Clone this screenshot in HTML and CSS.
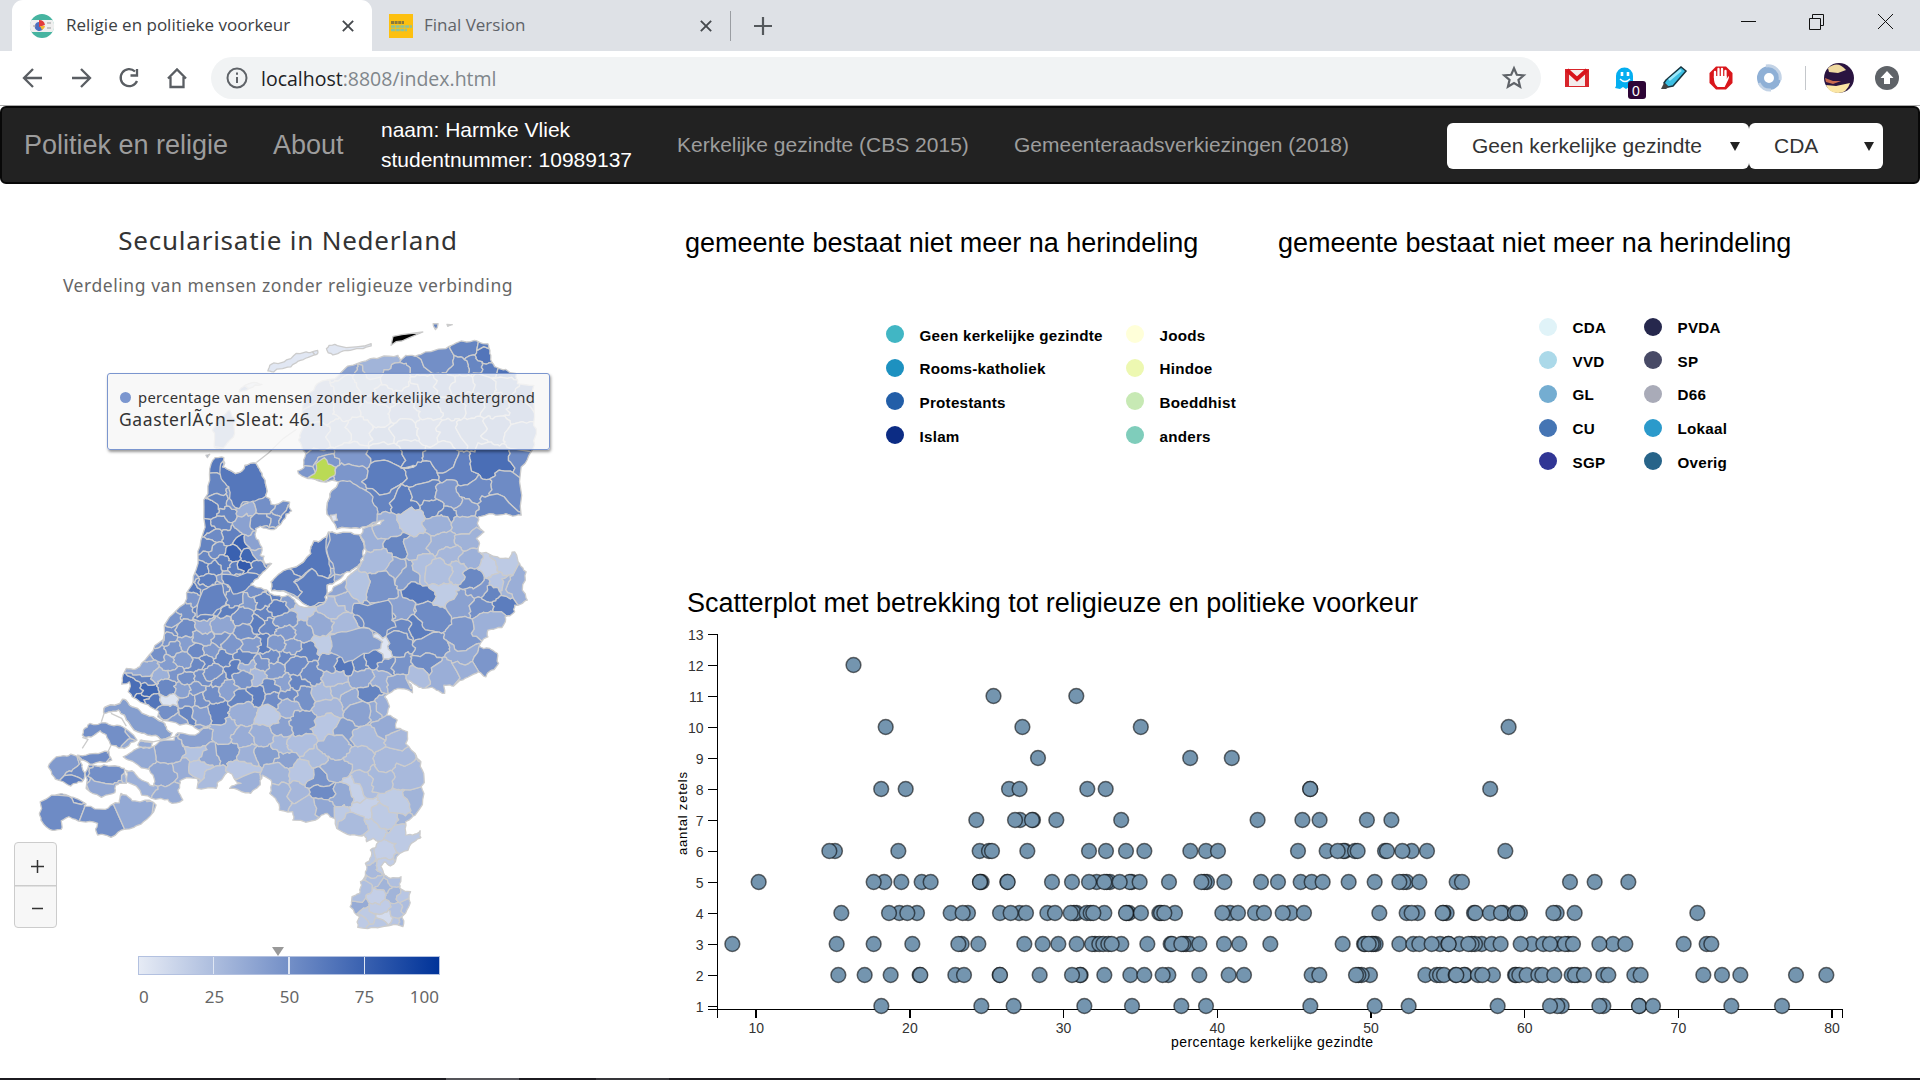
FILE: index.html
```html
<!DOCTYPE html>
<html lang="nl">
<head>
<meta charset="utf-8">
<title>Religie en politieke voorkeur</title>
<link rel="stylesheet" href="styles.css">
</head>
<body>
<div class="tabstrip">
  <div class="tab tab-active">
    <svg class="favicon" viewBox="0 0 24 24"><circle cx="12" cy="12" r="12" fill="#46b4a0"/><path d="M1.500 6h21a12 12 0 0 1 0 12h-21a12 12 0 0 1 0-12z" fill="#efefef"/><path d="M10 8a4.500 4.500 0 1 0 3 7l-3-3z" fill="#4a6fc0"/><path d="M9 6a6 6 0 0 1 6 5l-6 2z" fill="#e33b3b"/><path d="M10 12h5a5 5 0 0 1-3 4z" fill="#f4b731"/><path d="M3 12h3M17 9h4M17 14h4" stroke="#999"/></svg>
    <span>Religie en politieke voorkeur</span>
    <svg class="x" viewBox="0 0 14 14"><path d="M1 1l12 12M13 1L1 13"/></svg>
  </div>
  <div class="tab tab-idle">
    <svg class="favicon" viewBox="0 0 24 24"><path d="M0 0h24v24H0z" fill="#fdc010"/><path d="M2 8.500h13" stroke="#8b7a3c" stroke-width="3" stroke-dasharray="3 .6"/><path d="M2 12.500h21M2 16h16" stroke="#8fc29a" stroke-width="2.600" stroke-dasharray="4 .7"/></svg>
    <span>Final Version</span>
    <svg class="x" viewBox="0 0 14 14"><path d="M1 1l12 12M13 1L1 13"/></svg>
  </div>
  <svg class="plus" viewBox="0 0 18 18"><path d="M9 0v18M0 9h18"/></svg>
  <svg class="winctl" viewBox="0 0 154 20"><path d="M1 8.500h15M69.500 5.500h11v11h-11zM72.500 5v-3.500h11v11H81M138 1l15 15M153 1l-15 15"/></svg>
</div>
<div class="toolbar">
  <svg class="navicons" viewBox="0 0 170 24"><path d="M20 12H3M11 3l-9 9 9 9M50 12h17M59 3l9 9-9 9M113 5.500A8.500 8.500 0 1 0 115 15M115 3v6.500h-6.500M146 12.500l9-9 9 9M148.500 11v10h13V11"/></svg>
  <div class="omnibox">
    <svg class="info" viewBox="0 0 22 22"><circle cx="11" cy="11" r="9.500"/><path d="M11 10v6M11 5.500v2.200"/></svg>
    <span class="url">localhost<span>:8808/index.html</span></span>
    <svg class="star" viewBox="0 0 24 24"><path d="M12 3l2.600 6 6.400.5-4.900 4.200 1.500 6.300-5.600-3.400L6.400 20l1.500-6.300L3 9.500 9.400 9z"/></svg>
  </div>
  <svg class="ext" viewBox="0 0 340 44">
    <path d="M5 13h24v18H5z" fill="#d8252b"/><path d="M9 14h16v16H9z" fill="#f4ecec"/><path d="M7 14l10 9 10-9" fill="none" stroke="#d8141c" stroke-width="4"/>
    <path d="M56 30V20a8.500 8.500 0 0 1 17 0v13l-4-2-3 2-3-2-3 2-5-1z" fill="#04aef0"/><path d="M62 16v4M68 16v4" stroke="#fff" stroke-width="2.600"/><path d="M60 23q5 5 10 0" stroke="#fff" stroke-width="1.500" fill="none"/>
    <rect x="68" y="25" width="18" height="18" rx="3" fill="#2d0536"/><text x="72" y="40" class="badge">0</text>
    <path d="M106 24l15-13 5 4-13 15-5 1-4-4z" fill="#3cbfe3" stroke="#17343f" stroke-width="1.500"/><path d="M101 33l3-6 5 4-3 2z" fill="#444"/><path d="M109 24l12-10" stroke="#9be8fa" stroke-width="2.500"/>
    <path d="M156 10.500h10l6.500 6.500v10l-6.500 6.500h-10l-6.500-6.500v-10z" fill="#d9161b"/><path d="M155 22v-6M158.500 22v-9M162 22v-9M165.500 22v-7" stroke="#fff" stroke-width="2.300" stroke-linecap="round"/><path d="M153.900 20h12.700v3l2-3q1 1-1 5l-3 6h-7q-4-3-3.700-10z" fill="#fff"/>
    <circle cx="209" cy="22" r="8.500" fill="none" stroke="#8fb0d6" stroke-width="7"/><path d="M206 10a12 12 0 0 1 14 14M211 34a12 12 0 0 1-12-7" fill="none" stroke="#c3d3e6" stroke-width="3"/>
    <path d="M245.500 10v24" stroke="#c4c7cb"/>
    <circle cx="279" cy="22" r="15" fill="#2a1440"/><path d="M268 12q10-8 18 2l-8 3-9-1z" fill="#efd9a0"/><path d="M266 29l10 1 14-3q-3 10-12 10-9 0-12-8z" fill="#fbe6a4"/><path d="M265 22l8 3 8 0-8 3-7-2z" fill="#c86a4e"/>
    <circle cx="327" cy="22" r="12" fill="#5f6368"/><path d="M327 15l6.500 7h-3.500v6h-6v-6h-3.500z" fill="#fff"/>
  </svg>
</div>
<nav class="navbar">
  <a class="brand">Politiek en religie</a>
  <a class="brand about">About</a>
  <div class="who"><span>naam: Harmke Vliek</span><span>studentnummer: 10989137</span></div>
  <a class="link l1">Kerkelijke gezindte (CBS 2015)</a>
  <a class="link l2">Gemeenteraadsverkiezingen (2018)</a>
  <div class="sel s1"><span>Geen kerkelijke gezindte</span><i></i></div>
  <div class="sel s2"><span>CDA</span><i></i></div>
</nav>
<main class="page">
  <section class="mapcol">
    <h2 class="maptitle">Secularisatie in Nederland</h2>
    <p class="mapsub">Verdeling van mensen zonder religieuze verbinding</p>
    <div class="mapbox">
      <svg id="map" class="map" viewBox="0 350 1568 1840" preserveAspectRatio="none"></svg>
      <div class="tooltip">
        <div class="tip1"><b></b><span>percentage van mensen zonder kerkelijke achtergrond</span></div>
        <div class="tip2">GaasterlÃ¢n–Sleat: 46.1</div>
      </div>
      <div class="zoom"><svg viewBox="0 0 44 86"><path d="M22.500 17v13M16 23.500h13M17 65.500h11"/></svg></div>
    </div>
    <div class="axis">
      <i class="marker"></i>
      <div class="bar"><i></i><i></i><i></i></div>
      <div class="nums"><span>0</span><span>25</span><span>50</span><span>75</span><span>100</span></div>
    </div>
  </section>
  <section class="charts">
    <div class="pies">
      <div class="pie">
        <h3>gemeente bestaat niet meer na herindeling</h3>
        <ul class="legend lg1">
          <li><i style="background:#41b6c4"></i><span>Geen kerkelijke gezindte</span></li>
          <li><i style="background:#1d91c0"></i>Rooms-katholiek</li>
          <li><i style="background:#225ea8"></i>Protestants</li>
          <li><i style="background:#0c2c84"></i>Islam</li>
          <li><i style="background:#ffffd9"></i>Joods</li>
          <li><i style="background:#edf8b1"></i>Hindoe</li>
          <li><i style="background:#c7e9b4"></i>Boeddhist</li>
          <li><i style="background:#7fcdbb"></i>anders</li>
        </ul>
      </div>
      <div class="pie">
        <h3>gemeente bestaat niet meer na herindeling</h3>
        <ul class="legend lg2">
          <li><i style="background:#e0f3f8"></i>CDA</li>
          <li><i style="background:#abd9e9"></i>VVD</li>
          <li><i style="background:#74add1"></i>GL</li>
          <li><i style="background:#4575b4"></i>CU</li>
          <li><i style="background:#313695"></i>SGP</li>
          <li><i style="background:#26284d"></i>PVDA</li>
          <li><i style="background:#484a66"></i>SP</li>
          <li><i style="background:#a9abb8"></i>D66</li>
          <li><i style="background:#2b9acb"></i>Lokaal</li>
          <li><i style="background:#276489"></i>Overig</li>
        </ul>
      </div>
    </div>
    <h3 class="sctitle">Scatterplot met betrekking tot religieuze en politieke voorkeur</h3>
    <svg id="scatter" class="scatter" viewBox="660 620 1200 440"></svg>
  </section>
</main>
<div class="taskbar"><i></i><b></b></div>
<script src="charts.js"></script>
</body>
</html>
```
FILE: styles.css
```css
* { box-sizing: border-box; }
body { margin: 0; width: 1920px; height: 1080px; overflow: hidden; background: #fff; font-family: "Liberation Sans", Arial, sans-serif; display: flex; flex-direction: column; }
svg { display: block; flex: none; overflow: visible; }
span { white-space: nowrap; }

.tabstrip { height: 51px; flex: none; background: #dee1e6; display: flex; align-items: center; font: 17px "Open Sans", "Noto Sans", sans-serif; color: #5f6368; }
.tab { height: 51px; display: flex; align-items: center; }
.tab span { margin-top: -2px; }
.tab-active { margin-left: 12px; width: 360px; padding: 0 18px 0 18px; background: #fff; border-radius: 11px 11px 0 0; color: #3c4043; }
.tab-idle { width: 359px; height: 30px; padding: 0 18px 0 17px; border-right: 1px solid #9a9da2; }
.favicon { width: 24px; height: 24px; margin-right: 12px; }
.tab-idle .favicon { margin-right: 11px; }
.x { width: 12px; height: 12px; margin-left: auto; fill: none; stroke: #45494d; stroke-width: 2.2; }
.plus { width: 18px; height: 18px; margin-left: 23px; fill: none; stroke: #54585c; stroke-width: 2.2; }
.winctl { width: 154px; height: 20px; margin-left: auto; margin-right: 26px; margin-top: -5px; fill: none; stroke: #111; stroke-width: 1; }

.toolbar { height: 55px; flex: none; border-bottom: 1px solid #a9a9a9; display: flex; align-items: center; background: #fff; }
.navicons { width: 170px; height: 24px; margin-left: 22px; fill: none; stroke: #5a5e63; stroke-width: 2.3; }
.omnibox { margin-left: 19px; width: 1330px; height: 42px; border-radius: 21px; background: #f1f3f4; display: flex; align-items: center; padding: 0 14px 0 15px; font: 19.5px "Open Sans", "Noto Sans", sans-serif; color: #202124; }
.url > span { color: #80868b; }
.info { width: 22px; height: 22px; margin-right: 13px; fill: none; stroke: #5f6368; stroke-width: 2; }
.star { width: 26px; height: 26px; margin-left: auto; fill: none; stroke: #5f6368; stroke-width: 2; }
.ext { width: 340px; height: 44px; margin-left: 19px; }
.badge { font: 14px "Liberation Sans", sans-serif; fill: #fff; }

.navbar { height: 78px; flex: none; background: #222; border: 2px solid #080808; border-radius: 6px; display: flex; align-items: center; color: #9d9d9d; padding-left: 22px; }
.brand { font-size: 27px; width: 249px; }
.about { width: 108px; }
.who { color: #fff; font-size: 21px; line-height: 30px; display: flex; flex-direction: column; width: 296px; }
.link { font-size: 21px; }
.l1 { width: 337px; }
.l2 { width: 433px; }
.sel { height: 46px; background: #fff; border-radius: 6px; color: #333; font-size: 21px; display: flex; align-items: center; justify-content: space-between; padding: 0 9px 0 25px; margin-top: 2px; }
.sel i { border: 5.500px solid transparent; border-top: 9px solid #222; border-bottom: 0; }
.s1 { width: 302px; }
.s2 { width: 134px; }

.page { flex: 1; display: flex; }
.mapcol { width: 660px; font-family: "Noto Sans", "Open Sans", sans-serif; }
.maptitle { margin: 37px 0 0; width: 576px; text-align: center; font-weight: 400; font-size: 26px; line-height: 38px; color: #333; letter-spacing: .77px; }
.mapsub { margin: 13px 0 0; width: 576px; text-align: center; font-size: 17.500px; line-height: 26px; color: #666; letter-spacing: .56px; }
.mapbox { position: relative; height: 613px; margin-top: 19px; }
.map { width: 600px; height: 613px; overflow: hidden; }
.tooltip { position: absolute; left: 107px; top: 56px; width: 443px; height: 77px; border: 1.500px solid #7b96cf; border-radius: 3px; background: rgba(247,247,247,.85); box-shadow: 1px 2px 3px rgba(0,0,0,.4); color: #333; padding: 12px 0 0 11px; }
.tip1 { display: flex; align-items: center; font-size: 14.800px; line-height: 22px; letter-spacing: .33px; }
.tip1 b { width: 11px; height: 11px; border-radius: 50%; background: #7b96cf; margin: 0 7px 0 1px; }
.tip2 { font-size: 17.500px; line-height: 22px; letter-spacing: .6px; }
.zoom { position: absolute; left: 13.500px; top: 525px; width: 43px; height: 86px; background: linear-gradient(#ccc,#ccc) 0 42px/100% 1.500px no-repeat #f7f7f7; border: 1px solid #ccc; border-radius: 4px; }
.zoom svg { width: 44px; height: 86px; stroke: #333; stroke-width: 1.500; }
.axis { margin: 17px 0 0 138px; width: 302px; }
.marker { display: block; width: 0; border: 6px solid transparent; border-top: 9px solid #999; border-bottom: 0; margin-left: 134px; }
.bar { height: 19px; display: flex; justify-content: space-evenly; border: 1px solid #b3c1e0; background: linear-gradient(90deg, #e6ebf5, #003399); }
.bar i { width: 1.500px; background: #dfe6f3; }
.nums { display: grid; grid-template-columns: 39px 75px 75px 75px 38px; font-size: 17px; line-height: 24px; color: #666; margin-top: 10px; text-align: center; }
.nums span:first-child { text-align: left; padding-left: 1px; }
.nums span:last-child { justify-self: end; padding-right: 1px; }

.charts { flex: 1; }
h3 { font-weight: 400; font-size: 27px; line-height: 36px; margin: 0; color: #000; }
.pies { display: flex; padding: 41px 0 0 25px; height: 383px; }
.pie { width: 593px; flex: none; }
.legend { list-style: none; margin: 0; padding: 0; display: grid; grid-auto-flow: column; justify-content: start; font-weight: 700; font-size: 15.200px; letter-spacing: .25px; color: #000; }
.legend li { display: flex; align-items: center; }
.legend i { width: 18px; height: 18px; border-radius: 50%; margin-right: 15.500px; margin-top: -2px; }
.lg1 { grid-template-rows: repeat(4, 33.600px); grid-template-columns: 240px 200px; margin: 57.500px 0 0 201px; }
.lg2 { grid-template-rows: repeat(5, 33.600px); grid-template-columns: 105px 120px; margin: 50px 0 0 261px; }
.sctitle { margin-left: 27px; margin-top: 18px; }
.scatter { width: 1200px; height: 440px; margin-top: -1px; }
.scatter text { font-family: "Liberation Sans", Arial, sans-serif; font-size: 14px; fill: #333; }
.scatter .lab { fill: #000; }
.scatter .ylab { font-size: 13px; }
.scatter path { fill: none; stroke: #000; shape-rendering: crispEdges; }
.scatter circle { fill: #7495af; stroke: rgba(0,0,0,.56); stroke-width: 1.500; }
.map path { vector-effect: non-scaling-stroke; stroke: #ccc; stroke-width: 1.300; stroke-linejoin: round; }

.taskbar { position: absolute; left: 0; bottom: 0; width: 1920px; height: 2px; background: #1c1b20; display: flex; }
.taskbar i { width: 73px; margin-left: 446px; background: #55555a; }
.taskbar b { width: 73px; margin-left: 77px; background: #36363a; }
```
FILE: charts.js
```js
const NS = 'http://www.w3.org/2000/svg';
function add(parent, tag, attrs, text) {
  const el = document.createElementNS(NS, tag);
  for (const k in attrs) el.setAttribute(k, attrs[k]);
  if (text !== undefined) el.textContent = text;
  parent.appendChild(el);
  return el;
}

/* ---------- choropleth ---------- */
const land = [
  '562,772 585,772 582,800 597,808 615,820 632,812 640,795 668,788 680,812 693,840 694,888 705,895 708,912 740,902 757,906 755,920 762,932 747,942 745,955 735,970 722,984 708,988 695,984 680,978 668,985 668,1010 678,1028 685,1050 680,1065 690,1068 690,1085 696,1092 710,1090 700,1102 692,1112 680,1125 665,1140 655,1155 672,1162 700,1172 715,1185 735,1190 752,1185 770,1200 775,1210 805,1222 850,1205 855,1185 872,1160 905,1138 935,1105 950,1080 957,1055 952,1025 942,1005 948,985 975,978 1003,960 990,963 970,975 940,985 880,987 862,950 862,890 885,845 870,840 845,845 825,838 805,835 780,820 778,812 795,800 797,770 790,745 780,720 785,700 790,640 820,570 850,540 890,518 945,485 985,475 1040,465 1046,480 1060,465 1085,468 1100,462 1165,445 1205,422 1240,420 1262,430 1275,430 1280,460 1285,485 1305,505 1350,520 1352,550 1395,555 1397,650 1402,700 1385,760 1362,800 1362,945 1340,948 1322,940 1300,945 1280,940 1250,950 1252,980 1265,995 1245,1015 1250,1055 1300,1070 1330,1075 1338,1056 1345,1055 1358,1090 1375,1115 1365,1170 1378,1200 1365,1210 1345,1215 1345,1235 1320,1250 1312,1282 1275,1290 1275,1310 1258,1325 1252,1338 1280,1345 1300,1360 1303,1390 1285,1410 1270,1430 1250,1415 1215,1435 1185,1458 1160,1455 1162,1480 1140,1470 1130,1462 1105,1465 1080,1450 1065,1440 1078,1478 1040,1465 1020,1478 1005,1490 1018,1520 1010,1545 1038,1560 1035,1585 1065,1595 1060,1630 1085,1660 1100,1685 1108,1730 1108,1780 1085,1845 1060,1865 1060,1905 1078,1905 1098,1892 1100,1912 1075,1930 1045,1960 1020,1998 1005,1985 995,2000 1005,2025 1020,2035 1048,2030 1045,2065 1073,2075 1070,2115 1050,2150 1053,2180 1010,2178 980,2182 935,2182 940,2150 915,2120 920,2090 940,2080 945,2055 942,2045 955,2025 955,1990 970,1970 968,1950 990,1925 975,1915 958,1925 952,1905 915,1905 880,1885 875,1855 855,1840 840,1845 825,1860 765,1860 765,1835 730,1830 722,1800 705,1780 710,1745 685,1725 680,1755 655,1780 620,1768 600,1765 605,1758 630,1750 595,1715 578,1740 565,1765 515,1765 515,1735 470,1742 465,1770 478,1800 450,1810 420,1795 370,1785 330,1745 328,1710 345,1712 370,1740 402,1758 400,1725 390,1708 355,1690 322,1670 350,1650 390,1645 455,1620 465,1598 520,1598 550,1578 520,1590 470,1575 412,1550 415,1535 405,1528 380,1512 345,1490 335,1475 338,1445 318,1452 330,1405 348,1408 365,1400 400,1352 430,1300 470,1220 495,1165 512,1110 525,1020 533,920 548,840 556,780',
  '708,1145 730,1120 755,1105 812,1060 812,1040 820,1022 832,1025 858,995 880,1000 940,1003 953,1035 950,1070 940,1095 915,1115 900,1120 875,1145 855,1155 855,1180 850,1205 810,1220 790,1208 770,1190 740,1172 710,1172',
  '275,1520 320,1497 335,1508 360,1525 390,1548 425,1565 435,1580 450,1598 445,1610 420,1618 385,1605 350,1590 335,1565 325,1545 310,1530 285,1535 272,1540',
  '218,1590 235,1570 265,1568 290,1575 320,1580 358,1620 325,1645 290,1635 278,1605 262,1592 250,1602 225,1612 215,1605',
  '203,1665 250,1660 285,1655 292,1680 260,1685 235,1692 210,1680',
  '126,1700 160,1668 185,1662 205,1670 215,1695 222,1720 215,1745 205,1745 185,1758 165,1745 135,1722',
  '222,1720 232,1695 255,1698 300,1697 325,1705 330,1750 302,1755 300,1778 265,1792 225,1765',
  '360,1635 370,1620 398,1628 395,1642 375,1645',
  '105,1805 135,1785 165,1782 192,1792 225,1812 220,1818 275,1828 295,1812 312,1808 316,1780 330,1785 345,1802 390,1800 408,1815 375,1865 350,1882 325,1888 290,1912 255,1905 255,1870 215,1865 180,1850 160,1862 160,1888 130,1888 110,1865 103,1840',
  '560,740 555,690 585,645 600,630 618,660 610,710 580,748',
  '700,512 705,495 715,488 760,475 800,455 830,450 830,460 812,468 785,480 760,500 715,515',
  '853,445 860,435 875,432 890,438 970,430 970,437 915,450 890,455 870,464 858,458',
  '625,575 640,555 670,547 685,552 650,565',
  '1132,370 1145,370 1138,388', '1168,372 1182,373 1170,378', '538,765 548,762 542,772'
];
/* x, y, percentage */
const seeds = `885,515,40 990,495,30 1100,490,50 1155,485,50 1220,450,56 1195,500,54 1240,490,55 1267,465,64 1310,508,66 1267,437,60 1262,505,60
840,580,40 900,560,35 960,540,38 1030,540,45 1000,590,48 1060,580,50 1110,560,52 1160,550,58 1210,560,50 1260,560,62 1310,560,52 1370,590,55 1350,640,62 1290,620,60 1230,610,58 1180,620,60 1120,620,52 1060,640,50 980,640,42 910,620,40 850,640,42 830,700,45 880,690,42 940,690,45 1000,700,55 1060,700,58 1120,690,50 1180,700,58 1240,690,60 1300,680,62 1360,700,52
820,770,46 795,818,46 846,808,46 925,775,45 918,825,46 1010,765,62 1070,755,62 1000,825,60 1095,825,60 1145,770,58 1190,810,58 1290,775,68 1380,765,52 1235,880,52 1325,880,52 1010,890,56 1060,905,60 1110,880,56 1135,930,56 1175,895,45 1215,920,45 1275,930,54 915,910,46 1160,945,56
1020,985,32 1075,965,18 1145,965,32 1215,975,32 975,1015,32 1040,1030,55 1095,1040,32 1165,1030,31 1225,1020,31 985,1080,26 1020,1110,38 1065,1125,42 1110,1110,24 1150,1120,24 1195,1110,24 1185,1065,28 1225,1085,32 1275,1100,15 1330,1090,18 1305,1150,20 1355,1160,33 1232,1130,54 1282,1180,56 1255,1165,45 1312,1215,60 1325,1160,30 1160,1180,17 1090,1195,63 1210,1210,40 1262,1220,50 1280,1265,32 1125,1250,52 1045,1220,40 990,1160,48 930,1160,22 895,1195,32 885,1160,38 868,1225,27 980,1250,52 890,1275,27 920,1330,40 1050,1300,54 1095,1285,60 1215,1300,46 1120,1340,50 1210,1355,35 1272,1385,46 1035,1340,54 1003,1350,3 1115,1398,52 1090,1430,25 1150,1420,33 1215,1415,33 1020,1400,50 1045,1400,48 975,1370,60 935,1385,55 900,1400,63 1000,1440,33 1045,1450,38 940,1430,38 965,1480,56 920,1500,35 890,1470,30 845,1480,26 880,1435,28 1000,1520,33 975,1530,36 940,1530,40 860,1520,28
820,1065,63 905,1060,52 750,1140,60 815,1170,60
568,795,62 640,850,63 565,870,56 640,925,33 690,915,50 735,930,50 715,960,50 548,930,63 590,940,55 545,985,63 575,970,56 640,970,40 685,965,54 600,1005,58 560,1005,52 545,1035,56 632,1035,75 565,1050,52 665,1025,40 675,1055,36 610,1065,75 650,1070,72 585,1090,60 637,1100,78 618,1105,60 668,1108,60 535,1075,55 530,1105,62 560,1105,60 625,1145,62 545,1140,60 507,1165,62 525,1160,56 560,1205,57 500,1200,46 610,1195,54 635,1250,50 575,1215,57
690,1330,60 695,1240,56 670,1270,60 800,1355,56 785,1230,18 848,1330,17 810,1420,52 870,1385,50 740,1450,40 600,1465,40 670,1425,27 650,1400,32 580,1280,38 535,1270,34 390,1400,36 420,1425,32 490,1435,50 440,1460,54
435,1533,50 490,1545,56 565,1530,58 352,1470,68 385,1468,72 370,1500,76 405,1510,64 440,1500,4 700,1550,18 640,1535,33 750,1520,33 855,1585,20 790,1570,48 735,1580,40 590,1590,32 515,1612,40 440,1655,40 510,1655,22 595,1660,47 545,1670,38 640,1615,34 690,1605,33 700,1660,42 745,1680,40 430,1720,38 475,1715,34 525,1705,20 560,1735,26 370,1670,36 370,1760,32 450,1780,35 635,1710,20 650,1750,32 730,1720,30 780,1715,20 835,1735,48 845,1775,52 870,1705,35 885,1790,36 738,1790,30 770,1790,28 800,1820,27 840,1820,37 925,1770,14 955,1830,14 950,1755,25 1035,1800,17 1000,1850,18 1092,1790,30 1050,1730,27 1020,1680,27 940,1680,27 970,1620,26 1045,1620,28 880,1855,18 925,1875,26 970,1885,17 1040,1880,30 900,1600,42 875,1635,32 1000,1965,15 1050,1920,18 975,2010,27 1000,2060,30 1030,2085,30 935,2115,35 1005,2150,8 960,2150,18 1040,2170,20 985,2085,15 1060,2090,20 1030,2035,24
370,1560,40 280,1600,50 250,1672,52 160,1695,44 200,1720,52 185,1755,58 270,1712,50 265,1760,38 160,1830,52 265,1865,50 355,1830,36 590,690,42 760,480,2 900,445,2`.split(/\s+/).map(s => s.split(',').map(Number));

/* large municipalities with their own outline */
const large = [
  [46, '862,890 885,845 915,842 940,862 975,890 978,915 988,935 985,965 940,985 880,987 862,950'],
  [3, '864,945 879,942 882,960 868,963'],
  [63, '755,1105 812,1060 812,1040 820,1022 832,1025 858,995 860,1080 865,1120 858,1135 815,1105 788,1130'],
  [52, '860,995 880,1000 940,1003 953,1035 950,1070 940,1095 915,1115 900,1120 875,1122 862,1080'],
  [60, '708,1145 730,1120 755,1105 788,1130 768,1145 790,1175 778,1192 740,1172 710,1172'],
  [60, '768,1145 815,1105 858,1135 875,1122 875,1145 855,1155 855,1180 850,1205 810,1220 790,1208 778,1192 790,1175'],
  [54, '925,1210 1015,1200 1025,1240 1035,1280 1000,1315 950,1280 945,1255 922,1240'],
  [41, '862,1305 905,1295 965,1285 1000,1325 995,1345 950,1360 900,1388 862,1355'],
  [57, '530,1170 580,1150 595,1200 575,1225 555,1245 515,1252'],
  [62, '580,1122 670,1120 680,1125 665,1140 650,1160 610,1182 585,1150'],
  [63, '585,780 582,800 597,808 615,820 632,812 640,795 668,788 680,812 693,840 694,888 660,903 635,905 625,925 600,895 598,860 578,835'],
  [42, '275,1520 320,1497 335,1508 360,1525 390,1548 425,1565 435,1580 450,1598 445,1610 420,1618 385,1605 350,1590 335,1565 325,1545 310,1530 285,1535 272,1540'],
  [-1, '825,790 848,772 858,792 878,800 875,825 862,832 845,845 830,838 805,832 822,820']
];

let rs = 7;
const rnd = () => (rs = (rs * 16807) % 2147483647) / 2147483647;
const zones = [ /* x0,y0,x1,y1,min distance,base value,spread */
  [540, 900, 760, 1100, 34, 56, 16], [440, 1100, 800, 1500, 33, 51, 18], [380, 1300, 560, 1560, 31, 48, 20],
  [560, 1480, 860, 1560, 46, 38, 12], [640, 1560, 1020, 1760, 48, 31, 14], [800, 1230, 900, 1500, 44, 40, 24],
  [930, 1990, 1070, 2180, 30, 22, 12]
];
for (const [x0, y0, x1, y1, d, base, sp] of zones) {
  for (let i = 0; i < 1400; i++) {
    const x = x0 + rnd() * (x1 - x0), y = y0 + rnd() * (y1 - y0);
    if (seeds.every(s => Math.hypot(s[0] - x, s[1] - y) > d)) seeds.push([x, y, base + (rnd() - .5) * sp]);
  }
}
function cell(i) {
  const [sx, sy] = seeds[i];
  let poly = [[0, 300], [1568, 300], [1568, 2200], [0, 2200]];
  const near = seeds.map((s, j) => [Math.hypot(s[0] - sx, s[1] - sy), j]).sort((a, b) => a[0] - b[0]).slice(1, 45);
  for (const [, j] of near) {
    const [ox, oy] = seeds[j], mx = (sx + ox) / 2, my = (sy + oy) / 2;
    const f = p => (p[0] - mx) * (ox - sx) + (p[1] - my) * (oy - sy);
    const out = [];
    poly.forEach((a, k) => {
      const b = poly[(k + 1) % poly.length], fa = f(a), fb = f(b);
      if (fa <= 0) out.push(a);
      if ((fa < 0 && fb > 0) || (fa > 0 && fb < 0)) {
        const t = fa / (fa - fb);
        out.push([a[0] + t * (b[0] - a[0]), a[1] + t * (b[1] - a[1])]);
      }
    });
    poly = out;
  }
  return poly;
}
const hash = (a, b) => { const v = Math.sin(Math.round(a) * 12.9898 + Math.round(b) * 78.233) * 43758.5453; return v - Math.floor(v) - .5; };
/* borders wobble; both neighbours compute the same wobble from the shared edge */
function rough(a, b, depth, amp) {
  const len = Math.hypot(a[0] - b[0], a[1] - b[1]);
  if (depth === 0 || len < 9 || len > 400) return [a];
  const mx = (a[0] + b[0]) / 2, my = (a[1] + b[1]) / 2;
  const m = [mx + hash(mx, my) * len * amp, my + hash(my + 5, mx) * len * amp];
  return rough(a, m, depth - 1, amp).concat(rough(m, b, depth - 1, amp));
}
const mix = v => {
  if (v < 0) return '#bada55';
  const t = v / 100;
  return `rgb(${Math.round(230 - 230 * t)},${Math.round(235 - 184 * t)},${Math.round(245 - 92 * t)})`;
};
const parse = str => str.split(' ').map(s => s.split(',').map(Number));
const toPath = (p, depth, amp) => 'M' + p.flatMap((a, k) => rough(a, p[(k + 1) % p.length], depth, amp))
  .map(q => q[0].toFixed(1) + ' ' + q[1].toFixed(1)).join('L') + 'Z';
const map = document.getElementById('map');
const defs = add(map, 'defs', {}), clip = add(defs, 'clipPath', { id: 'land' });
const coast = land.map(str => toPath(parse(str), 2, .3));
coast.forEach(d => add(clip, 'path', { d }));
const g = add(map, 'g', { 'clip-path': 'url(#land)' });
seeds.forEach((s, i) => add(g, 'path', { d: toPath(cell(i), 3, .55), fill: mix(s[2]) }));
large.forEach(([v, str]) => add(g, 'path', { d: toPath(parse(str), 2, .3), fill: mix(v) }));
coast.forEach(d => add(map, 'path', { d, fill: 'none' }));
add(map, 'path', { d: 'M775 687L740 715L700 760L670 787M215 1612L230 1618L215 1645M290 1636L280 1660M272 1540L265 1565M290 1540L318 1555L330 1578M365 1620L400 1625L455 1610', fill: 'none' });
add(map, 'path', { d: 'M1022 435L1027 408L1050 403L1105 395L1070 412L1050 422L1035 424Z', fill: '#000' });

/* ---------- scatterplot ---------- */
const sc = document.getElementById('scatter');
add(sc, 'path', { d: 'M708 634.500H717.500V1009.500H708M717.500 1018V1009.500H1842.500V1018' });
for (let n = 1; n <= 13; n++) {
  const y = 1037.500 - 31 * n;
  add(sc, 'path', { d: `M708 ${y}H717` });
  add(sc, 'text', { x: 703.500, y: y + 5, 'text-anchor': 'end' }, n);
}
for (let n = 1; n <= 8; n++) {
  const x = 602.500 + 153.700 * n;
  add(sc, 'path', { d: `M${x} 1009V1018`, 'stroke-width': n === 3 || n === 6 || n === 7 ? 1 : 1.600 });
  add(sc, 'text', { x, y: 1033, 'text-anchor': 'middle' }, n * 10);
}
add(sc, 'text', { x: 1171, y: 1047, textLength: 202, class: 'lab' }, 'percentage kerkelijke gezindte');
add(sc, 'text', { x: 0, y: 0, textLength: 83, class: 'lab ylab', transform: 'translate(687 855) rotate(-90)' }, 'aantal zetels');

/* seats, then x offsets in thirds of a pixel for each third of the axis */
const rows = [
  [6, [465, 448, 655, 899, 927, 936, 1042], [87, 138, 198, 253, 391, 438, 474, 714, 800, 855, 850, 833, 885, 893, 975, 981, 1055, 1027, 1101], [196]],
  [5, [236, 613, 581, 664, 725, 752, 905, 900, 900, 982, 983, 1116], [36, 110, 87, 150, 140, 133, 215, 209, 179, 239, 327, 441, 433, 424, 493, 603, 654, 722, 755, 788, 866, 944, 1040, 1030, 1018, 1078, 1190, 1206], [390, 464, 565]],
  [4, [484, 658, 711, 682, 627, 812, 864, 848, 960, 1018, 992, 1038, 1102, 1125], [50, 42, 32, 80, 133, 92, 100, 207, 200, 198, 243, 298, 303, 345, 313, 510, 487, 534, 585, 612, 692, 668, 732, 958, 1040, 1073, 1055, 1160, 1150, 1148], [102, 106, 150, 190, 183, 225, 240, 232, 350, 340, 404, 772]],
  [3, [157, 470, 581, 697, 845, 835, 895, 1033, 1088, 1135], [50, 105, 96, 118, 130, 145, 184, 155, 262, 332, 336, 378, 390, 370, 364, 418, 492, 538, 631, 848, 912, 915, 947, 940, 935, 926, 1018, 1060, 1078, 1140, 1115, 1198, 1165, 1166], [125, 105, 95, 85, 155, 182, 275, 242, 310, 355, 330, 385, 375, 399, 519, 478, 556, 731, 800, 814]],
  [2, [475, 554, 632, 719, 721, 826, 852, 959, 960, 1079], [62, 60, 36, 133, 211, 253, 325, 308, 418, 506, 552, 755, 778, 930, 905, 895, 888, 1096, 1130, 1140, 1152, 1215, 1212, 1187, 1189], [114, 159, 127, 225, 228, 238, 260, 295, 307, 343, 395, 412, 405, 432, 490, 505, 583, 602, 790, 846, 901, 1068, 1159]],
  [1, [604, 904, 1001], [73, 216, 364, 438, 751, 944, 1046], [173, 365, 352, 330, 490, 478, 598, 597, 639, 874, 1026]]
];
const dots = [];
rows.forEach(([n, a, b, c]) => {
  a.forEach(t => dots.push([680 + t / 3, n]));
  b.forEach(t => dots.push([1060 + t / 3, n]));
  c.forEach(t => dots.push([1440 + t / 3, n]));
});
const upper = {
  7: [976.3, 1020, 1015, 1033, 1032, 1056.3, 1121.2, 1257.6, 1302.4, 1319.6, 1366.9, 1391.4],
  8: [881.2, 905.7, 1009, 1019.6, 1087.3, 1105.7, 1310.2, 1310.2, 1490.2],
  9: [1038, 1190.2, 1231.8], 10: [885.7, 1022.4, 1140.8, 1508.6], 11: [993.5, 1076.3], 12: [853.5]
};
for (const n in upper) upper[n].forEach(x => dots.push([x, +n]));
dots.forEach(([x, n]) => add(sc, 'circle', { cx: x, cy: 1037 - 31 * n, r: 7.4 }));
```
